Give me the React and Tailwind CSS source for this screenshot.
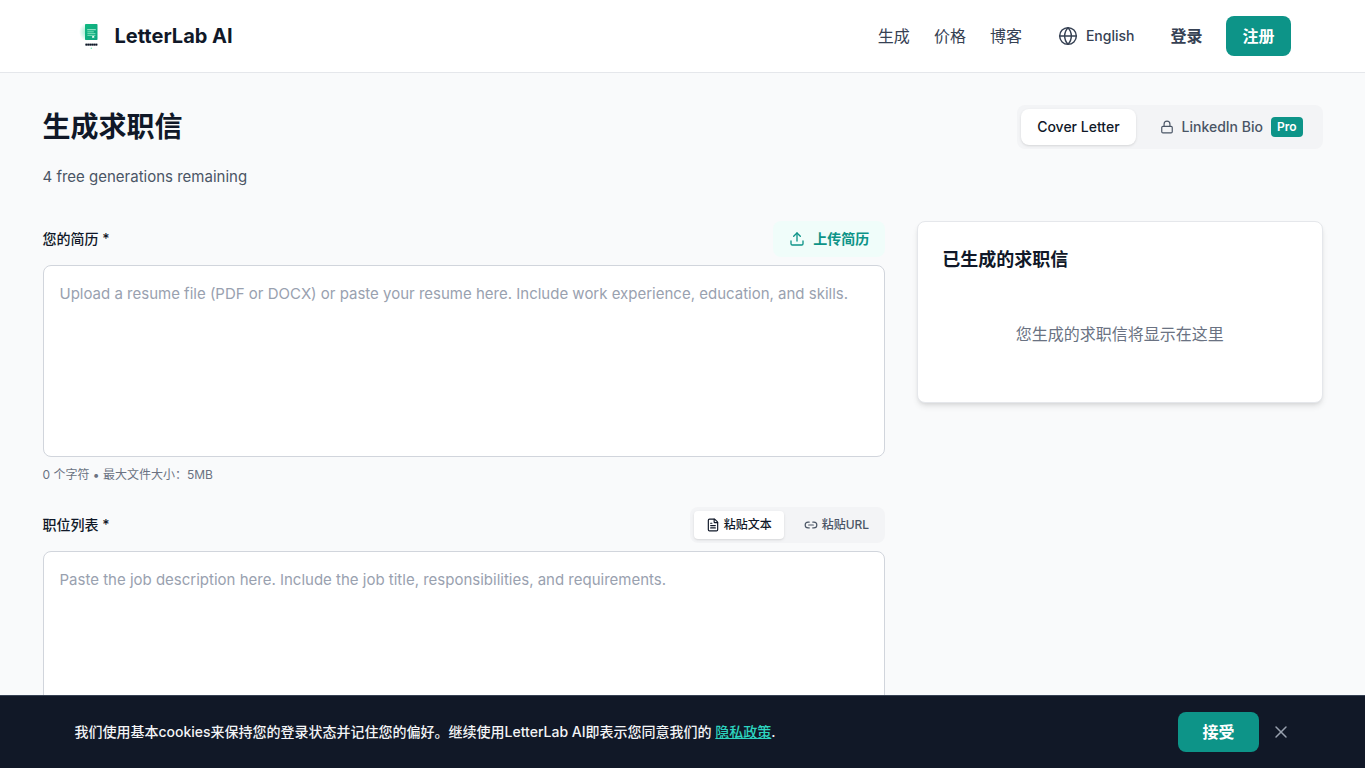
import React from 'react';
import { FileText, Globe, Link2, Lock, Upload, X } from 'lucide-react';

function Logo() {
  return (
    <svg viewBox="0 0 32 32" className="w-8 h-8" aria-hidden="true">
      <defs>
        <linearGradient id="page" x1="0" y1="0" x2="1" y2="1">
          <stop offset="0" stopColor="#10b981" />
          <stop offset="1" stopColor="#0fa47f" />
        </linearGradient>
        <radialGradient id="glow">
          <stop offset="0" stopColor="#34d399" stopOpacity="0.5" />
          <stop offset="1" stopColor="#34d399" stopOpacity="0" />
        </radialGradient>
      </defs>
      <ellipse cx="12" cy="12" rx="8" ry="9" fill="url(#glow)" />
      <rect x="10" y="4" width="12.5" height="16" rx="0.8" fill="url(#page)" />
      <path d="M12.2 9.7h8.6" stroke="#d1fae5" strokeWidth="0.8" />
      <path d="M12.4 11.8h6.4M12.4 13.6h8M12.4 15.4h8" stroke="#a7f3d0" strokeWidth="0.7" />
      <path d="M17.2 16h2v2.2l-1-0.7-1 0.7z" fill="#ecfdf5" />
      <path d="M10.4 24.6h12.2" stroke="#4b5563" strokeWidth="1.8" />
      <path d="M10.6 24.6h12" stroke="#111827" strokeWidth="1.6" strokeDasharray="1.4 0.6" />
      <circle cx="16.3" cy="28.3" r="0.7" fill="#6ee7b7" />
    </svg>
  );
}

function NavLink({ href, label }) {
  return (
    <a href={href} className="text-base text-gray-700 hover:text-gray-900 transition-colors">
      {label}
    </a>
  );
}

function Header() {
  return (
    <header className="bg-white border-b border-gray-200">
      <div className="max-w-7xl mx-auto px-8 py-4 flex items-center justify-between">
        <a href="/" className="flex items-center gap-2">
          <Logo />
          <span className="text-xl font-bold text-gray-900">LetterLab AI</span>
        </a>

        <nav className="flex items-center gap-6">
          <NavLink href="/generate" label="生成" />
          <NavLink href="/pricing" label="价格" />
          <NavLink href="/blog" label="博客" />
          <button className="flex items-center gap-2 px-3 py-2 text-sm font-medium text-gray-700 cursor-pointer">
            <Globe className="w-5 h-5" strokeWidth={1.75} />
            English
          </button>
          <a href="/login" className="text-base font-semibold text-gray-700">登录</a>
          <a href="/signup" className="bg-[#0d9488] text-white font-semibold text-base px-4 py-2 rounded-lg">注册</a>
        </nav>
      </div>
    </header>
  );
}

function ModeTabs() {
  return (
    <div className="flex gap-2 p-1 bg-gray-100 rounded-lg text-sm font-medium">
      <button className="px-4 py-2 bg-white text-gray-900 rounded-lg shadow-sm cursor-pointer">Cover Letter</button>
      <button className="flex items-center gap-2 px-4 text-gray-600 cursor-pointer">
        <Lock className="w-3.5 h-3.5" />
        LinkedIn Bio
        <span className="bg-[#0d9488] text-white text-xs font-semibold px-1.5 py-0.5 rounded">Pro</span>
      </button>
    </div>
  );
}

function SourceTabs() {
  return (
    <div className="flex gap-2 p-1 bg-gray-100 rounded-lg text-xs font-medium">
      <button className="flex items-center gap-1 px-3 py-1.5 bg-white text-gray-900 rounded shadow-sm cursor-pointer">
        <FileText className="w-3.5 h-3.5" />
        粘贴文本
      </button>
      <button className="flex items-center gap-1 px-3 py-1.5 text-gray-600 cursor-pointer">
        <Link2 className="w-3.5 h-3.5" />
        粘贴URL
      </button>
    </div>
  );
}

function Field({ id, label, placeholder, action }) {
  return (
    <div>
      <div className="flex items-center justify-between mb-2">
        <label htmlFor={id} className="text-sm font-medium text-gray-900">{label} *</label>
        {action}
      </div>
      <textarea
        id={id}
        placeholder={placeholder}
        className="block w-full h-48 p-4 bg-white border border-gray-300 rounded-lg text-[15px] leading-6 text-gray-900 placeholder:text-gray-400 resize-none"
      />
    </div>
  );
}

function CookieBar({ onClose }) {
  return (
    <div className="fixed bottom-0 inset-x-0 bg-[#111827] border-t border-gray-700">
      <div className="max-w-7xl mx-auto px-8 py-4 flex items-center justify-between">
        <p className="text-sm font-medium text-gray-100">
          我们使用基本cookies来保持您的登录状态并记住您的偏好。继续使用LetterLab AI即表示您同意我们的{' '}
          <a href="/privacy" className="text-[#2dd4bf] underline">隐私政策</a>.
        </p>
        <div className="flex items-center gap-3">
          <button onClick={onClose} className="bg-[#0d9488] text-white text-base font-bold px-6 py-2 rounded-lg cursor-pointer">
            接受
          </button>
          <button onClick={onClose} aria-label="关闭" className="text-gray-400 cursor-pointer">
            <X className="w-5 h-5" strokeWidth={1.75} />
          </button>
        </div>
      </div>
    </div>
  );
}

export default function App() {
  const [showCookies, setShowCookies] = React.useState(true);

  return (
    <div className="min-h-screen bg-[#f9fafb] text-gray-900 font-['Inter','Noto_Sans_CJK_SC',sans-serif]">
      <Header />

      <main className="max-w-7xl mx-auto py-8">
        <div className="flex items-center justify-between mb-4">
          <h1 className="text-[28px] leading-9 font-bold text-gray-900">生成求职信</h1>
          <ModeTabs />
        </div>
        <p className="text-[15px] leading-6 text-gray-600 mb-8">4 free generations remaining</p>

        <div className="grid grid-cols-3 gap-8 items-start">
          <div className="col-span-2">
            <Field
              id="resume"
              label="您的简历"
              placeholder="Upload a resume file (PDF or DOCX) or paste your resume here. Include work experience, education, and skills."
              action={
                <button className="flex items-center gap-2 px-4 py-2 bg-[#f0fdfa] text-[#0d9488] text-sm font-semibold rounded-lg cursor-pointer">
                  <Upload className="w-4 h-4" />
                  上传简历
                </button>
              }
            />
            <p className="text-xs text-gray-500 mt-2.5 mb-6">0 个字符 • 最大文件大小：5MB</p>
            <Field
              id="job"
              label="职位列表"
              placeholder="Paste the job description here. Include the job title, responsibilities, and requirements."
              action={<SourceTabs />}
            />
          </div>

          <section className="bg-white border border-gray-200 rounded-lg shadow-md p-6">
            <h2 className="text-lg font-semibold text-gray-900 mb-4">已生成的求职信</h2>
            <p className="py-8 text-center text-base text-gray-500">您生成的求职信将显示在这里</p>
          </section>
        </div>
      </main>

      {showCookies && <CookieBar onClose={() => setShowCookies(false)} />}
    </div>
  );
}
